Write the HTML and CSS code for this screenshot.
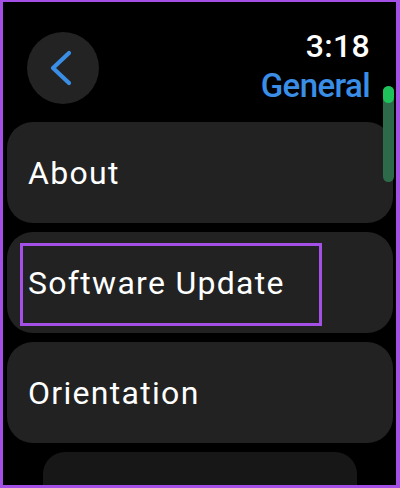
FILE: index.html
```html
<!DOCTYPE html>
<html lang="en">
<head>
<meta charset="utf-8">
<title>General</title>
<link rel="stylesheet" href="styles.css">
</head>
<body>
<div class="screen">
  <header class="header">
    <button class="back" aria-label="Back">
      <svg width="72" height="72" viewBox="0 0 72 72" aria-hidden="true">
        <polyline points="42,21 26,36 42,51" fill="none" stroke="#3a8ee6" stroke-width="4.2" stroke-linecap="round" stroke-linejoin="round"/>
      </svg>
    </button>
    <div class="title-col">
      <div class="time">3:18</div>
      <div class="title">General</div>
    </div>
  </header>
  <ul class="list">
    <li class="item">About</li>
    <li class="item">Software Update<span class="highlight"></span></li>
    <li class="item">Orientation</li>
    <li class="item item-small">Background App Refresh</li>
  </ul>
  <div class="scroll-track"><div class="scroll-thumb"></div></div>
</div>
</body>
</html>
```

FILE: styles.css
```css
html, body {
  margin: 0;
  padding: 0;
  background: #000;
}

.screen {
  position: relative;
  width: 400px;
  height: 488px;
  box-sizing: border-box;
  border-style: solid;
  border-color: #a44fe6;
  border-width: 2px 4px 3px 3px;
  background: #000;
  overflow: hidden;
  font-family: Roboto, "Liberation Sans", sans-serif;
  color: #fff;
}

.header {
  display: flex;
  justify-content: space-between;
  align-items: flex-start;
  height: 120px;
  padding: 0 26px 0 24px;
}

.back {
  margin-top: 30px;
  width: 72px;
  height: 72px;
  border: none;
  padding: 0;
  border-radius: 50%;
  background: #232323;
  display: flex;
  align-items: center;
  justify-content: center;
}

.title-col {
  display: flex;
  flex-direction: column;
  align-items: flex-end;
  padding-top: 24px;
}

.time {
  font-size: 32px;
  line-height: 40px;
  font-weight: 500;
  letter-spacing: 0.3px;
}

.title {
  font-size: 33px;
  line-height: 40px;
  font-weight: 500;
  color: #3a8ee6;
  letter-spacing: -0.6px;
}

.list {
  list-style: none;
  margin: 0;
  padding: 0 3px 0 4px;
  display: flex;
  flex-direction: column;
  gap: 9px;
}

.item {
  position: relative;
  height: 101px;
  border-radius: 26px;
  background: #222222;
  display: flex;
  align-items: center;
  padding-left: 21px;
  font-size: 32px;
  letter-spacing: 1.3px;
  white-space: nowrap;
}

.item-small {
  margin: 0 36px 0 36px;
  height: 83px;
  box-sizing: border-box;
  align-items: flex-start;
  padding-top: 33px;
  border-radius: 22px;
  background: #171717;
  padding-left: 25px;
  font-size: 27px;
  line-height: 32px;
  letter-spacing: 1px;
}

.highlight {
  position: absolute;
  left: 13px;
  top: 11px;
  width: 302px;
  height: 83px;
  box-sizing: border-box;
  border: 3px solid #a44fe6;
}

.scroll-track {
  position: absolute;
  left: 380px;
  top: 84px;
  width: 11px;
  height: 96px;
  border-radius: 6px;
  background: #2d6a49;
}

.scroll-thumb {
  width: 11px;
  height: 17px;
  border-radius: 6px;
  background: #1fc25a;
}
```
